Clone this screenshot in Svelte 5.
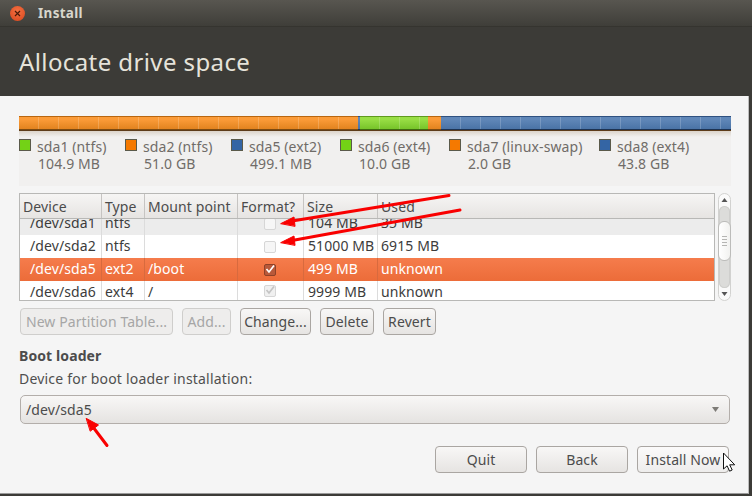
<script>
	const segments = [
		{ kind: 'orange', width: 339 },
		{ kind: 'blue', width: 2 },
		{ kind: 'green', width: 68 },
		{ kind: 'orange', width: 13 },
		{ kind: 'blue', width: 290 }
	];

	const legend = [
		{ name: 'sda1 (ntfs)', size: '104.9 MB', kind: 'green', width: 106 },
		{ name: 'sda2 (ntfs)', size: '51.0 GB', kind: 'orange', width: 106 },
		{ name: 'sda5 (ext2)', size: '499.1 MB', kind: 'blue', width: 109 },
		{ name: 'sda6 (ext4)', size: '10.0 GB', kind: 'green', width: 109 },
		{ name: 'sda7 (linux-swap)', size: '2.0 GB', kind: 'orange', width: 150 },
		{ name: 'sda8 (ext4)', size: '43.8 GB', kind: 'blue', width: 120 }
	];

	const rows = [
		{ device: '/dev/sda1', type: 'ntfs', mount: '', format: 'off', size: '104 MB', used: '35 MB', cls: 'clipped' },
		{ device: '/dev/sda2', type: 'ntfs', mount: '', format: 'off', size: '51000 MB', used: '6915 MB', cls: '' },
		{ device: '/dev/sda5', type: 'ext2', mount: '/boot', format: 'on', size: '499 MB', used: 'unknown', cls: 'selected' },
		{ device: '/dev/sda6', type: 'ext4', mount: '/', format: 'dim', size: '9999 MB', used: 'unknown', cls: 'last' }
	];

	const headers = ['Device', 'Type', 'Mount point', 'Format?', 'Size', 'Used'];
</script>

<div class="window">
	<div class="titlebar">
		<span class="close">
			<svg width="7" height="7" viewBox="0 0 7 7"><path d="M1 1l5 5M6 1l-5 5" stroke="#4a1a08" stroke-width="1.2" /></svg>
		</span>
		<span class="title">Install</span>
	</div>
	<div class="header"><h1>Allocate drive space</h1></div>

	<div class="content">
		<div class="partbar">
			{#each segments as s}
				<div class="seg {s.kind}" style="width: {s.width}px"></div>
			{/each}
		</div>
		<div class="legend">
			{#each legend as l}
				<div class="legend-item" style="width: {l.width}px">
					<span class="swatch {l.kind}"></span>
					<div class="legend-text">
						<div>{l.name}</div>
						<div>{l.size}</div>
					</div>
				</div>
			{/each}
		</div>

		<div class="table-wrap">
			<div class="table">
				<div class="row head">
					{#each headers as h}
						<div class="cell">{h}</div>
					{/each}
				</div>
				{#each rows as r}
					<div class="row {r.cls}">
						<div class="cell indent">{r.device}</div>
						<div class="cell">{r.type}</div>
						<div class="cell">{r.mount}</div>
						<div class="cell check-cell">
							<span class="check {r.format}">
								{#if r.format !== 'off'}
									<svg width="12" height="12" viewBox="0 0 12 12"><path d="M2.500 6l2.500 3 5-6.500" fill="none" stroke-width="1.700" /></svg>
								{/if}
							</span>
						</div>
						<div class="cell">{r.size}</div>
						<div class="cell">{r.used}</div>
					</div>
				{/each}
			</div>
			<div class="scrollbar">
				<svg class="step" width="13" height="12" viewBox="0 0 13 12"><path d="M3.500 8h6l-3-4z" fill="#555" /></svg>
				<div class="trough">
					<div class="thumb"><span></span><span></span><span></span><span></span></div>
				</div>
				<svg class="step" width="13" height="12" viewBox="0 0 13 12"><path d="M3.500 4h6l-3 4z" fill="#555" /></svg>
			</div>
		</div>

		<div class="actions">
			<button class="btn disabled new-table">New Partition Table...</button>
			<button class="btn disabled add">Add...</button>
			<button class="btn change">Change...</button>
			<button class="btn delete">Delete</button>
			<button class="btn revert">Revert</button>
		</div>

		<div class="boot-title">Boot loader</div>
		<div class="boot-label">Device for boot loader installation:</div>
		<div class="combo">
			<span>/dev/sda5</span>
			<svg width="7" height="5" viewBox="0 0 7 5"><path d="M0 0h7L3.500 5z" fill="#7d7b76" /></svg>
		</div>

		<div class="footer">
			<button class="btn wide">Quit</button>
			<button class="btn wide">Back</button>
			<button class="btn wide install">Install Now</button>
		</div>
	</div>

	<svg class="overlay" width="752" height="496" viewBox="0 0 752 496">
		<g fill="#f90000" stroke="#f90000" stroke-linecap="round">
			<path d="M449 195.500L292 221" fill="none" stroke-width="3" />
			<path d="M281 223.500l13-6.500 1 9z" stroke-width="1" />
			<path d="M460 210L292 240.500" fill="none" stroke-width="3" />
			<path d="M281 242.500l13-6.500 1 9z" stroke-width="1" />
			<path d="M107 445.500L93 427" fill="none" stroke-width="3" />
			<path d="M86.500 418.500l12 6.500-8 6z" stroke-width="1" />
		</g>
		<path d="M723.500 453v16l3.600-3.200 2.500 5.400 2.600-1.200-2.500-5.200h5z" fill="#fff" stroke="#111" stroke-width="1" />
	</svg>
</div>

<style>
	:global(body) {
		margin: 0;
		background: #3c3b37;
	}
	.window {
		position: relative;
		width: 752px;
		height: 496px;
		overflow: hidden;
		font-family: "Noto Sans", "Open Sans", sans-serif;
		font-size: 14px;
		letter-spacing: 0.1px;
		color: #3c3c3c;
		background: #3c3b37;
	}
	.titlebar {
		height: 26px;
		display: flex;
		align-items: center;
		padding-left: 10px;
		background: linear-gradient(#585650, #3f3e39);
		border-bottom: 1px solid #35342f;
	}
	.close {
		width: 15px;
		height: 15px;
		border-radius: 50%;
		background: radial-gradient(circle at 50% 35%, #f47142, #d8451c);
		display: flex;
		align-items: center;
		justify-content: center;
	}
	.title {
		margin-left: 13px;
		font-weight: 700;
		font-size: 13.500px;
		letter-spacing: 0.3px;
		color: #d8d6cc;
	}
	.header {
		height: 69px;
		padding-left: 19px;
		display: flex;
		align-items: center;
		box-sizing: border-box;
	}
	h1 {
		margin: 0;
		font-weight: 400;
		font-size: 24px;
		letter-spacing: 0.4px;
		color: #e6e3da;
	}
	.content {
		width: 749px;
		height: 398px;
		box-sizing: border-box;
		padding: 20px 19px 0;
		background: #f5f5f5;
		border-right: 1px solid #bdbdbd;
		border-bottom: 1px solid #9a9a9a;
	}
	.partbar {
		display: flex;
		width: 712px;
		height: 14px;
		box-shadow: 0 1px 0 #5d3c1a;
		position: relative;
	}
	.seg {
		height: 100%;
		box-sizing: border-box;
		border-top: 1px solid;
		border-bottom: 1px solid;
	}
	.seg.orange {
		background: repeating-linear-gradient(90deg, transparent 0 19px, rgba(255, 255, 255, 0.18) 19px 20px), linear-gradient(#fb9b38 20%, #e2831f);
		border-color: #b9660f #7c4a10 #7c4a10;
	}
	.seg.blue {
		background: repeating-linear-gradient(90deg, transparent 0 19px, rgba(255, 255, 255, 0.18) 19px 20px), linear-gradient(#6087b8 20%, #4a73a6);
		border-color: #2f5180 #1d3353 #1d3353;
	}
	.seg.green {
		background: repeating-linear-gradient(90deg, transparent 0 19px, rgba(255, 255, 255, 0.18) 19px 20px), linear-gradient(#98de45 20%, #77c42a);
		border-color: #5f9a1d #3f6b10 #3f6b10;
	}
	.legend {
		display: flex;
		width: 712px;
		height: 56px;
		box-sizing: border-box;
		padding-top: 8px;
		background: linear-gradient(#d8cfc4 0, #f1f0ef 7px, #f1f0ef);
	}
	.legend-item {
		display: flex;
		flex: none;
	}
	.swatch {
		flex: none;
		width: 10px;
		height: 10px;
		margin-top: 1px;
		border: 1px solid #5a5a4a;
	}
	.swatch.green {
		background: #73d216;
	}
	.swatch.orange {
		background: #f57900;
	}
	.swatch.blue {
		background: #3465a4;
	}
	.legend-text {
		margin-left: 6px;
		line-height: 17px;
		color: #706c68;
		white-space: nowrap;
	}
	.legend-text div:last-child {
		padding-left: 1px;
	}
	.table-wrap {
		display: flex;
		margin-top: 7px;
		width: 712px;
		height: 108px;
		justify-content: space-between;
	}
	.table {
		width: 696px;
		box-sizing: border-box;
		border: 1px solid #b8b8b6;
		background: #fff;
		overflow: hidden;
	}
	.row {
		display: grid;
		grid-template-columns: 82px 43px 93px 66px 74px 1fr;
		height: 23px;
		line-height: 22px;
	}
	.row.head {
		line-height: 25px;
		background: linear-gradient(#f6f5f4, #e6e4e2);
		border-bottom: 1px solid #b8b8b6;
		height: 24px;
	}
	.row.clipped {
		height: 16px;
		background: #ececec;
		overflow: hidden;
	}
	.row.clipped .cell {
		height: 23px;
		margin-top: -7px;
		line-height: 22px;
	}
	.row.last {
		height: 20px;
	}
	.row.selected {
		background: linear-gradient(#f57c4c, #ec6c39);
		color: #fff;
	}
	.cell {
		padding-left: 3px;
		box-sizing: border-box;
		white-space: nowrap;
		overflow: hidden;
		border-right: 1px solid #dcdcdc;
	}
	.row.selected .cell {
		border-right-color: #d86a3e;
	}
	.row.head .cell {
		color: #4b4b4b;
		border-right-color: #c6c4c2;
	}
	.row .cell:last-child {
		border-right: 0;
	}
	.cell.indent {
		padding-left: 10px;
	}
	.row .cell:nth-child(5) {
		padding-left: 4px;
	}
	.row.head .cell:nth-child(5) {
		padding-left: 3px;
	}
	.check-cell {
		display: flex;
		align-items: center;
		justify-content: center;
		padding-left: 0;
		padding-right: 1px;
	}
	.check {
		width: 10px;
		height: 10px;
		border: 1px solid #d6d6d6;
		border-radius: 2px;
		background: #f6f6f6;
		display: block;
		position: relative;
	}
	.check svg {
		position: absolute;
		left: -1px;
		top: -2px;
	}
	.check.on {
		background: #b9593a;
		border-color: #8e4127;
	}
	.check.on path {
		stroke: #fff;
	}
	.check.dim {
		background: #f0f0f0;
	}
	.check.dim path {
		stroke: #c4c4c4;
	}
	.scrollbar {
		width: 13px;
		box-sizing: border-box;
		border: 1px solid #d2d2d0;
		border-radius: 7px;
		background: #fafafa;
		display: flex;
		flex-direction: column;
		align-items: center;
		position: relative;
	}
	.step {
		flex: none;
		margin: 0 -1px;
	}
	.trough {
		flex: 1;
		width: 100%;
		background: #dcdcda;
		border-radius: 6px;
		box-shadow: inset 0 0 0 1px #cfcfcd;
		padding-top: 15px;
		box-sizing: border-box;
	}
	.thumb {
		height: 40px;
		box-sizing: border-box;
		border: 1px solid #bcbcba;
		border-radius: 6px;
		margin: 0 -1px;
		background: linear-gradient(90deg, #ffffff, #f2f2f0);
		display: flex;
		flex-direction: column;
		align-items: center;
		justify-content: center;
		gap: 2px;
	}
	.thumb span {
		width: 5px;
		height: 1px;
		background: #b5b5b3;
	}
	.actions {
		display: flex;
		margin-top: 7px;
		padding-left: 1px;
		gap: 9px;
	}
	.btn {
		height: 27px;
		padding: 0;
		box-sizing: border-box;
		font: inherit;
		letter-spacing: inherit;
		color: #4c4c4c;
		border: 1px solid #aaa6a2;
		border-radius: 4px;
		background: linear-gradient(#f8f7f6, #e6e4e2);
		white-space: nowrap;
	}
	.btn.disabled {
		color: #a6a6a6;
		border-color: #cfcecc;
		background: #eeedec;
	}
	.new-table {
		width: 153px;
	}
	.add {
		width: 49px;
	}
	.change {
		width: 71px;
	}
	.delete {
		width: 54px;
	}
	.revert {
		width: 53px;
	}
	.boot-title {
		margin-top: 12px;
		font-weight: 700;
		line-height: 18px;
		color: #4c4c4c;
	}
	.boot-label {
		margin-top: 5px;
		line-height: 18px;
		color: #4f4f4f;
		letter-spacing: 0.2px;
	}
	.combo {
		margin: 7px 0 0 1px;
		width: 710px;
		height: 29px;
		box-sizing: border-box;
		padding: 0 10px 0 5px;
		display: flex;
		align-items: center;
		justify-content: space-between;
		border: 1px solid #b3aeaa;
		border-radius: 5px;
		background: linear-gradient(#f8f7f6, #e5e3e1);
		color: #4c4c4c;
	}
	.footer {
		display: flex;
		justify-content: flex-end;
		gap: 9px;
		margin-top: 22px;
	}
	.wide {
		width: 92px;
	}
	.install {
		background: linear-gradient(#fbfafa, #eeedec);
	}
	.overlay {
		position: absolute;
		left: 0;
		top: 0;
		pointer-events: none;
	}
</style>
